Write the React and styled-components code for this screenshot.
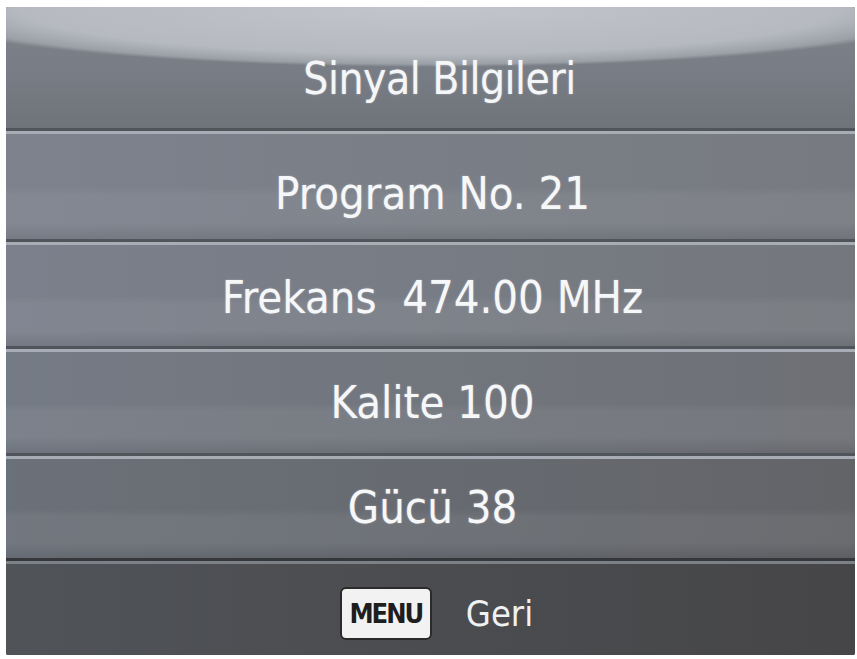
import React from "react";
import styled, { createGlobalStyle } from "styled-components";

const GlobalStyle = createGlobalStyle`
  html, body {
    margin: 0;
    padding: 0;
    background: #ffffff;
  }
  body {
    font-family: "DejaVu Sans Condensed", "DejaVu Sans", sans-serif;
  }
`;

const Screen = styled.div`
  width: 849px;
  height: 648px;
  margin: 7px 0 0 6px;
  display: flex;
  flex-direction: column;
  overflow: hidden;
  border-radius: 2px;
  background: #5a5d63;
`;

const Header = styled.div`
  height: 121px;
  flex: none;
  display: flex;
  align-items: center;
  justify-content: center;
  box-sizing: border-box;
  padding-left: 18px;
  background:
    radial-gradient(530px 60px at 50% 0, #c2c6cc 0%, #b6bac0 78%, #9ba0a7 95%, rgba(0, 0, 0, 0) 100%),
    linear-gradient(180deg, #80848c 0%, #777b83 60%, #6f737a 100%);
`;

const Title = styled.div`
  color: #f4f6f8;
  font-size: 44px;
  letter-spacing: -0.5px;
  padding-top: 22px;
  text-shadow: 0 0 2px rgba(255, 255, 255, 0.4);
`;

const Row = styled.div`
  height: ${(p) => p.h}px;
  flex: none;
  box-sizing: border-box;
  display: flex;
  align-items: center;
  justify-content: center;
  border-top: 3px solid #50545b;
  box-shadow: inset 0 3px 0 #a8adb5;
  padding-top: ${(p) => p.shift}px;
  padding-left: 4px;
  background:
    linear-gradient(180deg, rgba(255, 255, 255, 0) 0%, rgba(255, 255, 255, 0) 52%, rgba(255, 255, 255, 0.05) 60%, rgba(255, 255, 255, 0.05) 85%, rgba(0, 0, 0, 0.06) 100%),
    linear-gradient(90deg, ${(p) => p.left} 0%, ${(p) => p.right} 100%);
`;

const Value = styled.div`
  color: #f6f7f9;
  font-size: 45px;
  white-space: pre;
  text-shadow: 0 0 2px rgba(255, 255, 255, 0.35);
`;

const Footer = styled.div`
  flex: 1;
  box-sizing: border-box;
  display: flex;
  align-items: center;
  justify-content: center;
  gap: 34px;
  border-top: 3px solid #35373b;
  box-shadow: inset 0 3px 0 #7c8087;
  padding: 10px 0 0 12px;
  background: linear-gradient(90deg, #505358 0%, #4a4b4e 60%, #464648 100%);
`;

const KeyCap = styled.div`
  width: 92px;
  height: 53px;
  box-sizing: border-box;
  display: flex;
  align-items: center;
  justify-content: center;
  background: #f2f2f2;
  border: 2px solid #2a2a2a;
  border-radius: 6px;
  color: #1e1e1e;
  font-size: 27px;
  font-weight: bold;
  letter-spacing: -2px;
`;

const Hint = styled.div`
  color: #f0f1f3;
  font-size: 36px;
`;

const rows = [
  { text: "Program No. 21", h: 111, shift: 16, left: "#7d828d", right: "#777a80" },
  { text: "Frekans  474.00 MHz", h: 107, shift: 6, left: "#7b808c", right: "#74777c" },
  { text: "Kalite 100", h: 107, shift: 3, left: "#757b85", right: "#6e7075" },
  { text: "Gücü 38", h: 105, shift: 0, left: "#6b7179", right: "#636468" },
];

export default function App() {
  return (
    <>
      <GlobalStyle />
      <Screen>
        <Header>
          <Title>Sinyal Bilgileri</Title>
        </Header>
        {rows.map((r) => (
          <Row key={r.text} h={r.h} shift={r.shift} left={r.left} right={r.right}>
            <Value>{r.text}</Value>
          </Row>
        ))}
        <Footer>
          <KeyCap>MENU</KeyCap>
          <Hint>Geri</Hint>
        </Footer>
      </Screen>
    </>
  );
}
